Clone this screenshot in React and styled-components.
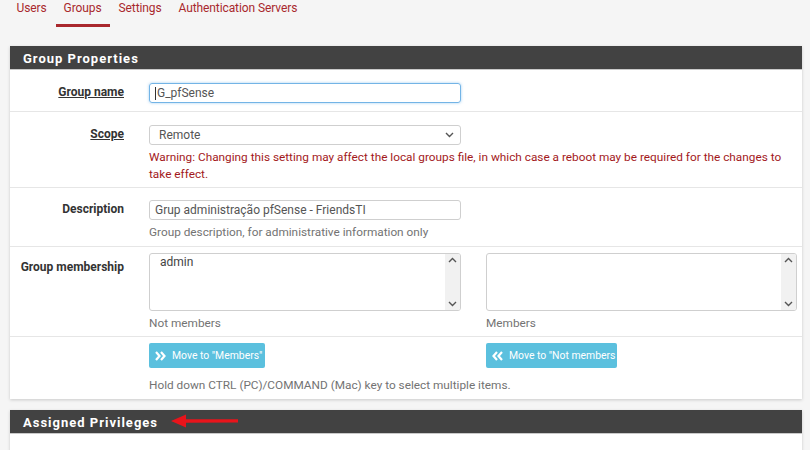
import React from "react";
import styled, { createGlobalStyle } from "styled-components";

const GlobalStyle = createGlobalStyle`
  html, body {
    margin: 0;
    padding: 0;
    background: #f5f5f5;
    font-family: Roboto, "Liberation Sans", Arial, sans-serif;
    font-size: 12px;
    color: #333;
  }
`;

const Page = styled.div`
  width: 810px;
  height: 450px;
  overflow: hidden;
  padding: 0 8px 0 10px;
  box-sizing: border-box;
`;

const Tabs = styled.nav`
  display: flex;
  margin-left: -2px;
  height: 46px;
`;

const Tab = styled.a`
  position: relative;
  padding: 0 8.5px;
  height: 28px;
  line-height: 17px;
  font-size: 12px;
  letter-spacing: -0.1px;
  color: #a9282d;
  text-decoration: none;
  cursor: pointer;
  &::after {
    content: "";
    display: ${(p) => (p.$active ? "block" : "none")};
    position: absolute;
    left: 1px;
    right: 0;
    top: 24px;
    height: 3px;
    background: #a9282d;
  }
`;

const Panel = styled.section`
  background: #fff;
  box-shadow: 0 1px 3px rgba(0, 0, 0, 0.18);
  margin-bottom: 11px;
`;

const PanelHeading = styled.h2`
  position: relative;
  margin: 0;
  height: 24px;
  line-height: 25px;
  padding-left: 13px;
  background: #424242;
  border-bottom: 1px solid #c9c9c9;
  box-sizing: border-box;
  color: #fff;
  font-size: 13px;
  font-weight: 700;
  letter-spacing: 1px;
`;

const Arrow = styled.svg`
  position: absolute;
  left: 158px;
  top: 2px;
`;

const Row = styled.div`
  display: grid;
  grid-template-columns: 114px 1fr;
  column-gap: 25px;
  padding: ${(p) => p.$pt}px 5px ${(p) => p.$pb}px 0;
  border-bottom: ${(p) => (p.$last ? "none" : "1px solid #e6e6e6")};
`;

const Label = styled.div`
  text-align: right;
  font-weight: 700;
  font-size: 12px;
  line-height: 17px;
  padding-top: ${(p) => p.$pt || 1}px;
  color: #333;
  text-decoration: ${(p) => (p.$underline ? "underline" : "none")};
`;

const Field = styled.div`
  min-width: 0;
`;

const TextInput = styled.div`
  width: 312px;
  height: 20px;
  box-sizing: border-box;
  border: 1px solid ${(p) => (p.$focus ? "#73b4e6" : "#cfcfcf")};
  box-shadow: ${(p) => (p.$focus ? "0 0 3px rgba(102,175,233,0.6)" : "none")};
  border-radius: 3px;
  padding: 0 5px;
  line-height: 18px;
  font-size: 12px;
  color: #555;
  display: flex;
  align-items: center;
`;

const Caret = styled.span`
  width: 1px;
  height: 13px;
  background: #333;
  margin-right: 1px;
`;

const SelectBox = styled(TextInput)`
  justify-content: space-between;
  padding: 0 6px 0 9px;
`;

const Help = styled.div`
  margin-top: ${(p) => p.$mt || 5}px;
  font-size: 11.8px;
  line-height: 17px;
  color: ${(p) => (p.$warn ? "#a3191c" : "#737373")};
`;

const Pair = styled.div`
  display: grid;
  grid-template-columns: 312px 311px;
  column-gap: 25px;
`;

const ListBox = styled.div`
  height: 58px;
  box-sizing: border-box;
  border: 1px solid #cfcfcf;
  border-radius: 3px;
  display: flex;
  overflow: hidden;
`;

const ListItems = styled.div`
  flex: 1;
  padding: 1px 10px;
  font-size: 12px;
  line-height: 14px;
  color: #444;
`;

const ScrollBar = styled.div`
  width: 15px;
  background: #f1f1f1;
  display: flex;
  flex-direction: column;
  justify-content: space-between;
  align-items: center;
  padding: 3px 0;
`;

const Button = styled.button`
  display: inline-flex;
  align-items: center;
  gap: 6px;
  height: 25px;
  padding: 0 ${(p) => p.$pr}px 0 6px;
  border: none;
  border-radius: 2px;
  background: #5bc0de;
  color: #fff;
  font-family: Roboto, "Liberation Sans", Arial, sans-serif;
  font-size: 10.4px;
  white-space: nowrap;
  cursor: pointer;
  svg {
    flex-shrink: 0;
  }
`;

const PanelBody = styled.div`
  height: 20px;
`;

function Chevron({ up }) {
  return (
    <svg width="9" height="6" viewBox="0 0 9 6">
      <path
        d={up ? "M1 5 L4.5 1.5 L8 5" : "M1 1 L4.5 4.5 L8 1"}
        fill="none"
        stroke="#555"
        strokeWidth="1.4"
      />
    </svg>
  );
}

function DoubleChevron({ left }) {
  return (
    <svg width="11" height="10" viewBox="0 0 11 10">
      <g fill="none" stroke="#fff" strokeWidth="2.2" strokeLinejoin="miter">
        {left ? (
          <>
            <path d="M5 1 L1.5 5 L5 9" />
            <path d="M10 1 L6.5 5 L10 9" />
          </>
        ) : (
          <>
            <path d="M1 1 L4.5 5 L1 9" />
            <path d="M6 1 L9.5 5 L6 9" />
          </>
        )}
      </g>
    </svg>
  );
}

function List({ items }) {
  return (
    <ListBox>
      <ListItems>
        {items.map((i) => (
          <div key={i}>{i}</div>
        ))}
      </ListItems>
      <ScrollBar>
        <Chevron up />
        <Chevron />
      </ScrollBar>
    </ListBox>
  );
}

export default function App() {
  return (
    <>
      <GlobalStyle />
      <Page>
        <Tabs>
          <Tab>Users</Tab>
          <Tab $active>Groups</Tab>
          <Tab>Settings</Tab>
          <Tab>Authentication Servers</Tab>
        </Tabs>

        <Panel>
          <PanelHeading>Group Properties</PanelHeading>

          <Row $pt={13} $pb={8}>
            <Label $underline>Group name</Label>
            <Field>
              <TextInput $focus>
                <Caret />
                G_pfSense
              </TextInput>
            </Field>
          </Row>

          <Row $pt={13} $pb={4}>
            <Label $underline>Scope</Label>
            <Field>
              <SelectBox>
                Remote
                <Chevron />
              </SelectBox>
              <Help $warn $mt={4}>
                Warning: Changing this setting may affect the local groups file, in which case a reboot may be required for the changes to take effect.
              </Help>
            </Field>
          </Row>

          <Row $pt={12} $pb={5}>
            <Label>Description</Label>
            <Field>
              <TextInput>Grup administração pfSense - FriendsTI</TextInput>
              <Help $mt={4}>Group description, for administrative information only</Help>
            </Field>
          </Row>

          <Row $pt={6} $pb={4}>
            <Label $pt={6}>Group membership</Label>
            <Field>
              <Pair>
                <div>
                  <List items={["admin"]} />
                  <Help $mt={4}>Not members</Help>
                </div>
                <div>
                  <List items={[]} />
                  <Help $mt={4}>Members</Help>
                </div>
              </Pair>
            </Field>
          </Row>

          <Row $pt={6} $pb={5} $last>
            <div />
            <Field>
              <Pair>
                <div>
                  <Button $pr={3}>
                    <DoubleChevron />
                    Move to "Members"
                  </Button>
                </div>
                <div>
                  <Button $pr={2}>
                    <DoubleChevron left />
                    Move to "Not members
                  </Button>
                </div>
              </Pair>
              <Help $mt={9}>Hold down CTRL (PC)/COMMAND (Mac) key to select multiple items.</Help>
            </Field>
          </Row>
        </Panel>

        <Panel>
          <PanelHeading>
            Assigned Privileges
            <Arrow width="72" height="18" viewBox="0 0 72 18">
              <path d="M70 7.3 L18 7.3 L18 2.5 L3 9 L18 15.5 L18 10.7 L70 10.5 Z" fill="#e8141b" />
            </Arrow>
          </PanelHeading>
          <PanelBody />
        </Panel>
      </Page>
    </>
  );
}
